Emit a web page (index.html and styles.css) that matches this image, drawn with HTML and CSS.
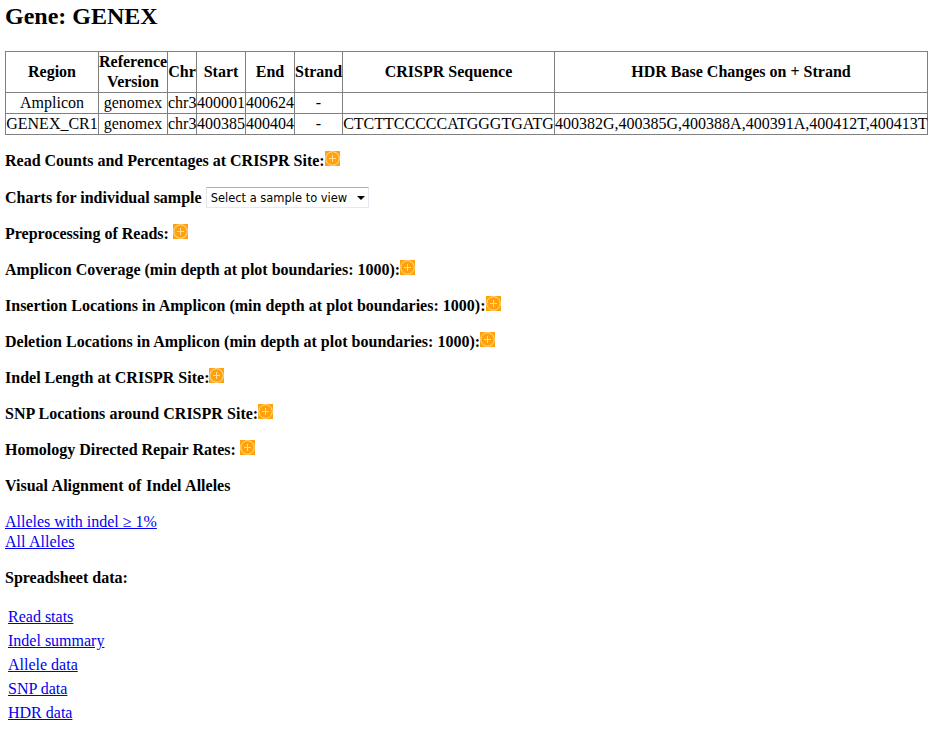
FILE: index.html
```html
<!DOCTYPE html>
<html lang="en">
<head>
<meta charset="utf-8">
<title>Gene: GENEX</title>
<link rel="stylesheet" href="styles.css">
</head>
<body>
<svg class="defs" aria-hidden="true">
  <symbol id="plus" viewBox="0 0 15 15">
    <rect width="15" height="15" fill="#ffa20d"/>
    <circle cx="7.5" cy="7.5" r="6.8" fill="none" stroke="#ffe0a6" stroke-width="1"/>
    <path d="M4 7.5h7M7.5 4v7" stroke="#ffdc9c" stroke-width="1"/>
  </symbol>
</svg>
<h2 class="title">Gene: GENEX</h2>
<table class="regions">
  <colgroup><col class="c-region"><col class="c-ref"><col class="c-chr"><col class="c-pos"><col class="c-pos"><col class="c-strand"><col class="c-seq"><col class="c-hdr"></colgroup>
  <tr class="head"><th>Region</th><th>Reference<br>Version</th><th>Chr</th><th>Start</th><th>End</th><th>Strand</th><th>CRISPR Sequence</th><th>HDR Base Changes on + Strand</th></tr>
  <tr><td>Amplicon</td><td>genomex</td><td>chr3</td><td>400001</td><td>400624</td><td>-</td><td></td><td></td></tr>
  <tr><td>GENEX_CR1</td><td>genomex</td><td>chr3</td><td>400385</td><td>400404</td><td>-</td><td>CTCTTCCCCCATGGGTGATG</td><td>400382G,400385G,400388A,400391A,400412T,400413T</td></tr>
</table>
<main class="sections">
  <div class="row"><b>Read Counts and Percentages at CRISPR Site:</b><svg class="icon"><use href="#plus"/></svg></div>
  <div class="row picker"><b>Charts for individual sample</b><span class="select"><span>Select a sample to view</span><svg class="arrow" viewBox="0 0 8 4"><path d="M0 0h8L4 4z"/></svg></span></div>
  <div class="row"><b>Preprocessing of Reads:</b><svg class="icon spaced"><use href="#plus"/></svg></div>
  <div class="row"><b>Amplicon Coverage (min depth at plot boundaries: 1000):</b><svg class="icon"><use href="#plus"/></svg></div>
  <div class="row loose"><b>Insertion Locations in Amplicon (min depth at plot boundaries: 1000):</b><svg class="icon"><use href="#plus"/></svg></div>
  <div class="row loose"><b>Deletion Locations in Amplicon (min depth at plot boundaries: 1000):</b><svg class="icon"><use href="#plus"/></svg></div>
  <div class="row"><b>Indel Length at CRISPR Site:</b><svg class="icon"><use href="#plus"/></svg></div>
  <div class="row looser"><b>SNP Locations around CRISPR Site:</b><svg class="icon"><use href="#plus"/></svg></div>
  <div class="row"><b>Homology Directed Repair Rates:</b><svg class="icon spaced"><use href="#plus"/></svg></div>
  <div class="row loosest"><b>Visual Alignment of Indel Alleles</b></div>
  <div class="links"><a href="#">Alleles with indel ≥ 1%</a><br><a class="loosest" href="#">All Alleles</a></div>
  <div class="row"><b>Spreadsheet data:</b></div>
</main>
<ul class="sheets">
  <li><a href="#">Read stats</a></li>
  <li><a href="#">Indel summary</a></li>
  <li><a href="#">Allele data</a></li>
  <li><a href="#">SNP data</a></li>
  <li><a href="#">HDR data</a></li>
</ul>
</body>
</html>
```
FILE: styles.css
```css
body {
  margin: 0;
  padding: 1px 5px 0;
  background: #fff;
  color: #000;
  font: 16px/20px "Liberation Serif", "Times New Roman", serif;
  overflow: hidden;
}
.defs { display: none; }
.title { margin: 0 0 20px; font-size: 24px; line-height: 30px; }
.regions {
  width: 923px;
  table-layout: fixed;
  border-collapse: collapse;
  text-align: center;
  white-space: nowrap;
}
.regions th, .regions td { padding: 0; border: 1px solid #808080; height: 20px; }
.regions .head th { height: 40px; }
.c-region { width: 93px; }
.c-ref { width: 69px; }
.c-chr { width: 29px; }
.c-pos { width: 49px; }
.c-strand { width: 48px; }
.c-seq { width: 212px; }
.c-hdr { width: 373px; }
.sections { display: flex; flex-direction: column; gap: 16px; margin-top: 16px; }
.row { display: flex; height: 20px; white-space: nowrap; }
.loose { word-spacing: 0.1px; }
.looser { word-spacing: 0.25px; }
.loosest { word-spacing: 0.5px; }
.icon { width: 15px; height: 15px; flex: none; }
.spaced { margin-left: 4px; }
.picker { height: 21px; align-items: center; }
.select {
  box-sizing: border-box;
  display: flex;
  align-items: center;
  justify-content: space-between;
  width: 163px;
  height: 21px;
  margin-left: 4px;
  padding: 1px 3px 0 4px;
  border: 1px solid #e3e9ef;
  border-top-color: #abadb3;
  border-left-color: #e2e3ea;
  font: 12.75px/18px "DejaVu Sans Condensed", "DejaVu Sans", sans-serif;
}
.arrow { width: 8px; height: 4px; }
a { color: #00e; text-decoration: underline; }
.sheets { margin: 17px 0 0; padding: 0 0 0 3px; list-style: none; }
.sheets li { height: 24px; line-height: 24px; }
```
